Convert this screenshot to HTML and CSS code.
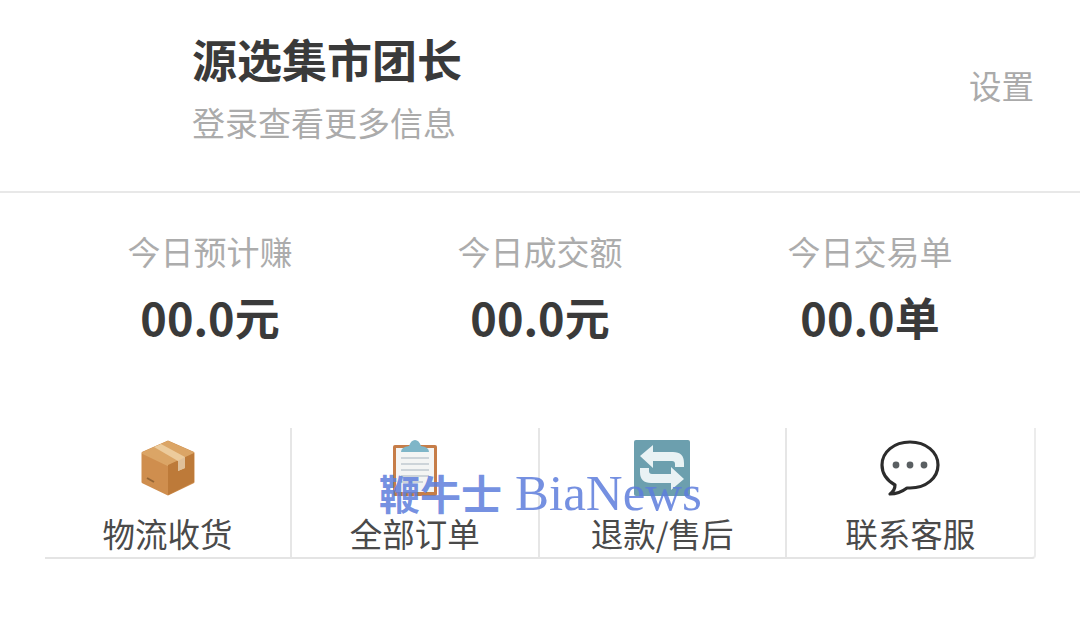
FILE: index.html
```html
<!DOCTYPE html>
<html lang="zh-CN">
<head>
  <meta charset="UTF-8">
  <title>源选集市团长</title>
  <link rel="stylesheet" href="styles.css">
</head>
<body>

<header class="top">
  <div class="user">
    <h1>源选集市团长</h1>
    <p>登录查看更多信息</p>
  </div>
  <a class="settings">设置</a>
</header>

<section class="stats">
  <div class="stat">
    <span class="stat-label">今日预计赚</span>
    <strong class="stat-value">00.0元</strong>
  </div>
  <div class="stat">
    <span class="stat-label">今日成交额</span>
    <strong class="stat-value">00.0元</strong>
  </div>
  <div class="stat">
    <span class="stat-label">今日交易单</span>
    <strong class="stat-value">00.0单</strong>
  </div>
</section>

<nav class="menu">
  <a class="menu-item">
    <svg class="icon" viewBox="0 0 60 60">
      <path d="M30 4 55 15 55 44 30 56 5 44 5 15Z" fill="#cf8e4e" stroke="#cf8e4e" stroke-width="3" stroke-linejoin="round"/>
      <path d="M30 4 55 15 30 27 5 15Z" fill="#dba566" stroke="#dba566" stroke-width="2" stroke-linejoin="round"/>
      <path d="M30 27 56 15 56 44 30 57Z" fill="#bd7a39"/>
      <path d="M16 9 23 6 47 19 47 30 40 33 40 23Z" fill="#eccb9c"/>
      <path d="M40 23 47 19 47 30 40 33Z" fill="#dfc09a"/>
      <path d="M9 40 16 44" stroke="#946535" stroke-width="2"/>
    </svg>
    <span>物流收货</span>
  </a>
  <a class="menu-item">
    <svg class="icon" viewBox="0 0 60 60">
      <rect x="8" y="7" width="44" height="51" rx="2" fill="#c67d48"/>
      <rect x="11" y="10" width="38" height="44" fill="#f4f5f4"/>
      <path d="M16 20H44M16 26H44M16 32H44M16 38H44M16 44H38" stroke="#cdd4d9" stroke-width="2"/>
      <path d="M16 14Q16 9 24 8 26 2 30 2 34 2 36 8 44 9 44 14Z" fill="#7fb6c8"/>
    </svg>
    <span>全部订单</span>
  </a>
  <a class="menu-item">
    <svg class="icon" viewBox="0 0 60 60">
      <rect x="2" y="2" width="56" height="56" rx="2" fill="#6c9fae"/>
      <path d="M8 18 21 7V14H41Q52 14 52 25V29H43V26Q43 23 40 23H21V30Z" fill="#e9f2f4"/>
      <path d="M52 41 39 52V45H19Q8 45 8 34V30H17V33Q17 36 20 36H39V29Z" fill="#e9f2f4"/>
    </svg>
    <span>退款/售后</span>
  </a>
  <a class="menu-item">
    <svg class="icon" viewBox="0 0 60 60">
      <path d="M30 4C14 4 2 14 2 27 2 36 8 43 15 47 15 51 13 54 10 56 17 56 23 53 27 50 28 50 29 50 30 50 46 50 58 40 58 27 58 14 46 4 30 4Z" fill="#fff" stroke="#2c2c2c" stroke-width="3.2" stroke-linejoin="round"/>
      <circle cx="16" cy="27" r="3.4" fill="#5a5f62"/>
      <circle cx="30" cy="27" r="3.4" fill="#5a5f62"/>
      <circle cx="44" cy="27" r="3.4" fill="#5a5f62"/>
    </svg>
    <span>联系客服</span>
  </a>
</nav>

<div class="watermark"><span class="watermark-cn">鞭牛士</span><span>BiaNews</span></div>

</body>
</html>
```

FILE: styles.css
```css
* { box-sizing: border-box; }
html, body { height: 100%; }
body { margin: 0; background: #fff; color: #333; font-family: "Noto Sans CJK SC", "Noto Sans", sans-serif; position: relative; overflow: hidden; }

.top { height: 193px; padding: 29px 46px 0 192px; display: flex; justify-content: space-between; align-items: flex-start; border-bottom: 2px solid #e8e8e8; }
.user h1 { margin: 0; font-size: 45px; line-height: 60px; font-weight: 700; color: #3a3a3a; }
.user p { margin: 11px 0 0; font-size: 33px; line-height: 44px; color: #ababab; }
.settings { font-size: 32.5px; line-height: 44px; color: #aaa; margin-top: 34px; }

.stats { margin: 0 45px; padding-top: 34px; display: grid; grid-template-columns: repeat(3, 1fr); }
.stat { display: flex; flex-direction: column; align-items: center; }
.stat-label { font-size: 33px; line-height: 48px; color: #acacac; }
.stat-value { margin-top: 14px; font-size: 45px; line-height: 56px; font-weight: 700; color: #3a3a3a; }

.menu { margin: 83px 45px 0; width: 991px; height: 131px; display: grid; grid-template-columns: repeat(4, 1fr); border-bottom: 2px solid #e4e4e4; border-right: 2px solid #ececec; border-radius: 0 0 4px 0; }
.menu-item { display: flex; flex-direction: column; align-items: center; padding-top: 10px; border-right: 2px solid #e6e6e6; font-size: 32.5px; line-height: 34px; color: #4a4a4a; }
.menu-item:last-child { border-right: none; }
.icon { width: 60px; height: 60px; margin-bottom: 18px; }

.watermark { position: absolute; left: 379px; top: 470px; display: flex; align-items: baseline; gap: 13px; font-family: "Liberation Serif", serif; font-size: 51px; line-height: 44px; color: rgba(93, 125, 220, 0.85); white-space: nowrap; }
.watermark-cn { font-family: "Noto Sans CJK SC", serif; font-size: 41px; font-weight: 700; }
```
